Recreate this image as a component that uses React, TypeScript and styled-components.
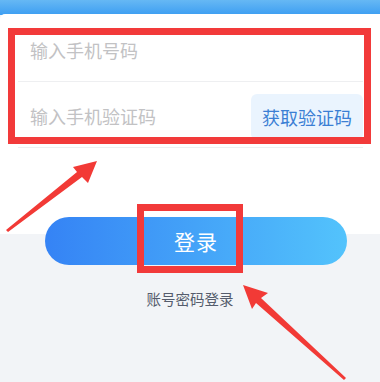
import React from "react";
import styled, { createGlobalStyle } from "styled-components";

const GlobalStyle = createGlobalStyle`
  html, body { margin: 0; padding: 0; }
  body {
    background: #f2f4f7;
    font-family: "Noto Sans CJK SC", "Noto Sans", sans-serif;
  }
`;

const Page = styled.div`
  position: relative;
  width: 380px;
  height: 382px;
  overflow: hidden;
  background: #f2f4f7;
`;

const TopBar = styled.div`
  height: 15px;
  background: linear-gradient(180deg, #66b8f4 0%, #3d9ef2 100%);
`;

const Card = styled.div`
  background: #ffffff;
  height: 220px;
  margin-top: -1px;
  border-radius: 5px 0 0 0;
  padding: 2px 17px 0 18px;
  box-sizing: border-box;
`;

const Row = styled.div`
  height: 66px;
  display: flex;
  align-items: center;
  justify-content: space-between;
  border-bottom: 1px solid #eeeff1;
  padding: 3px 0 0 12px;
  box-sizing: border-box;
`;

const Placeholder = styled.span`
  font-size: 18px;
  color: #c2c2c4;
`;

const CodeButton = styled.div`
  height: 46px;
  width: 112px;
  display: flex;
  align-items: center;
  justify-content: center;
  background: #eaf4fe;
  border-radius: 6px;
  color: #3b7fd4;
  font-size: 18px;
  margin-top: 2px;
`;

const Actions = styled.div`
  display: flex;
  flex-direction: column;
  align-items: center;
  margin-top: -17px;
`;

const LoginButton = styled.div`
  width: 302px;
  height: 48px;
  margin-left: 12px;
  border-radius: 24px;
  background: linear-gradient(90deg, #3583f5 0%, #44a3f8 50%, #53c3fc 100%);
  display: flex;
  align-items: center;
  justify-content: center;
  color: #ffffff;
  font-size: 21px;
  letter-spacing: 1px;
`;

const SwitchLink = styled.div`
  margin-top: 23px;
  font-size: 14.5px;
  color: #555c6c;
`;

const Mark = styled.div<{ $l: number; $t: number; $w: number; $h: number }>`
  position: absolute;
  left: ${(p) => p.$l}px;
  top: ${(p) => p.$t}px;
  width: ${(p) => p.$w}px;
  height: ${(p) => p.$h}px;
  border: 7px solid #f23a3a;
  box-sizing: border-box;
  pointer-events: none;
`;

const Overlay = styled.svg`
  position: absolute;
  left: 0;
  top: 0;
  pointer-events: none;
`;

export default function App() {
  return (
    <Page>
      <GlobalStyle />
      <TopBar />
      <Card>
        <Row>
          <Placeholder>输入手机号码</Placeholder>
        </Row>
        <Row>
          <Placeholder>输入手机验证码</Placeholder>
          <CodeButton>获取验证码</CodeButton>
        </Row>
      </Card>
      <Actions>
        <LoginButton>登录</LoginButton>
        <SwitchLink>账号密码登录</SwitchLink>
      </Actions>

      <Mark $l={8} $t={28} $w={363} $h={116} />
      <Mark $l={137} $t={204} $w={106} $h={69} />

      <Overlay width="380" height="382" viewBox="0 0 380 382">
        <polygon
          fill="#f23a36"
          points="97,161 88,183 82,177 8,232 6,230 77,172 73,167"
        />
        <polygon
          fill="#f23a36"
          points="243,285 268,293 261,298 346,378 344,380 256,303 252,309"
        />
      </Overlay>
    </Page>
  );
}
